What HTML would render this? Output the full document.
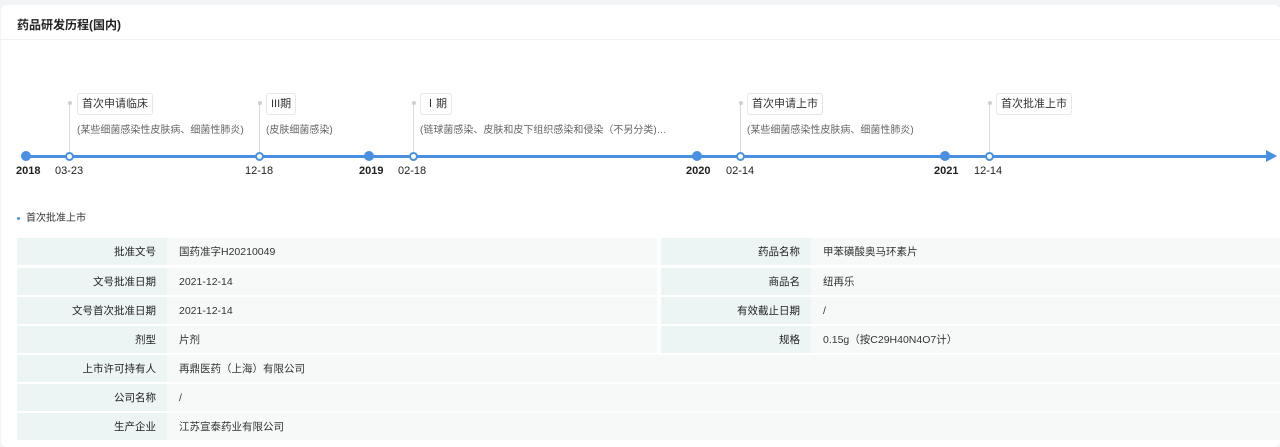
<!DOCTYPE html>
<html><head><meta charset="utf-8"><style>
*{margin:0;padding:0;box-sizing:border-box}
body{width:1280px;height:447px;background:#f3f4f6;font-family:"Liberation Sans","Noto Sans CJK SC",sans-serif;position:relative;overflow:hidden;color:#333}
.card{position:absolute;left:1px;top:5px;width:1279px;height:442px;background:#fff;border-radius:6px}
.title{position:absolute;left:17px;top:16px;font-size:12px;font-weight:bold;color:#222}
.hr{position:absolute;left:1px;top:39px;width:1279px;height:1px;background:#eef0f2}
.line{position:absolute;left:26px;top:155px;width:1242px;height:3px;background:#4a90e2}
.arrow{position:absolute;left:1266px;top:150px;width:0;height:0;border-left:11px solid #4a90e2;border-top:6.5px solid transparent;border-bottom:6.5px solid transparent}
.big{position:absolute;top:151px;width:10px;height:10px;border-radius:50%;background:#4a90e2}
.ring{position:absolute;top:152px;width:9px;height:9px;border-radius:50%;background:#fff;border:2px solid #4a90e2}
.yr{position:absolute;top:165px;font-size:11px;font-weight:bold;color:#222}
.dt{position:absolute;top:165px;font-size:11px;color:#222}
.vl{position:absolute;top:103px;width:1px;height:50px;background:#d8d8d8}
.vd{position:absolute;top:101px;width:4px;height:4px;border-radius:50%;background:#d0d0d0}
.tag{position:absolute;top:93px;height:22px;padding:0 4px;border:1px solid #e4e7eb;border-radius:3px;font-size:11px;line-height:20px;color:#333;background:#fff}
.sub{position:absolute;top:121px;font-size:10px;color:#666}
.sec{position:absolute;left:17px;top:209px;font-size:10px;color:#333}
.sec:before{content:"";display:inline-block;width:3px;height:3px;border-radius:50%;background:#4a90e2;margin-right:6px;vertical-align:middle}
.lb{position:absolute;height:27px;background:#edf4f4;font-size:10.5px;line-height:28px;text-align:right;padding-right:11px;color:#222;width:150px}
.va{position:absolute;height:27px;background:#f7f9f9;font-size:10.5px;line-height:28px;padding-left:12px;color:#333}
</style></head><body>
<div class="card"></div>
<div class="title">药品研发历程(国内)</div>
<div class="hr"></div>
<div class="line"></div><div class="arrow"></div>

<div class="vl" style="left:69px"></div><div class="vd" style="left:68px"></div>
<div class="vl" style="left:259px"></div><div class="vd" style="left:258px"></div>
<div class="vl" style="left:413px"></div><div class="vd" style="left:412px"></div>
<div class="vl" style="left:740px"></div><div class="vd" style="left:739px"></div>
<div class="vl" style="left:989px"></div><div class="vd" style="left:988px"></div>

<div class="big" style="left:21px"></div>
<div class="ring" style="left:65px"></div>
<div class="ring" style="left:255px"></div>
<div class="big" style="left:364px"></div>
<div class="ring" style="left:409px"></div>
<div class="big" style="left:692px"></div>
<div class="ring" style="left:736px"></div>
<div class="big" style="left:940px"></div>
<div class="ring" style="left:985px"></div>

<div class="yr" style="left:16px">2018</div>
<div class="dt" style="left:55px">03-23</div>
<div class="dt" style="left:245px">12-18</div>
<div class="yr" style="left:359px">2019</div>
<div class="dt" style="left:398px">02-18</div>
<div class="yr" style="left:686px">2020</div>
<div class="dt" style="left:726px">02-14</div>
<div class="yr" style="left:934px">2021</div>
<div class="dt" style="left:974px">12-14</div>

<div class="tag" style="left:77px">首次申请临床</div>
<div class="tag" style="left:266px">III期</div>
<div class="tag" style="left:420px">Ⅰ期</div>
<div class="tag" style="left:747px">首次申请上市</div>
<div class="tag" style="left:996px">首次批准上市</div>
<div class="sub" style="left:77px">(某些细菌感染性皮肤病、细菌性肺炎)</div>
<div class="sub" style="left:266px">(皮肤细菌感染)</div>
<div class="sub" style="left:420px">(链球菌感染、皮肤和皮下组织感染和侵染（不另分类)…</div>
<div class="sub" style="left:747px">(某些细菌感染性皮肤病、细菌性肺炎)</div>

<div class="sec">首次批准上市</div>

<div class="lb" style="left:17px;top:238px">批准文号</div><div class="va" style="left:167px;top:238px;width:490px">国药准字H20210049</div>
<div class="lb" style="left:17px;top:268px">文号批准日期</div><div class="va" style="left:167px;top:268px;width:490px">2021-12-14</div>
<div class="lb" style="left:17px;top:297px">文号首次批准日期</div><div class="va" style="left:167px;top:297px;width:490px">2021-12-14</div>
<div class="lb" style="left:17px;top:326px">剂型</div><div class="va" style="left:167px;top:326px;width:490px">片剂</div>
<div class="lb" style="left:17px;top:355px">上市许可持有人</div><div class="va" style="left:167px;top:355px;width:1113px">再鼎医药（上海）有限公司</div>
<div class="lb" style="left:17px;top:384px">公司名称</div><div class="va" style="left:167px;top:384px;width:1113px">/</div>
<div class="lb" style="left:17px;top:413px">生产企业</div><div class="va" style="left:167px;top:413px;width:1113px">江苏宣泰药业有限公司</div>

<div class="lb" style="left:661px;top:238px">药品名称</div><div class="va" style="left:811px;top:238px;width:469px">甲苯磺酸奥马环素片</div>
<div class="lb" style="left:661px;top:268px">商品名</div><div class="va" style="left:811px;top:268px;width:469px">纽再乐</div>
<div class="lb" style="left:661px;top:297px">有效截止日期</div><div class="va" style="left:811px;top:297px;width:469px">/</div>
<div class="lb" style="left:661px;top:326px">规格</div><div class="va" style="left:811px;top:326px;width:469px">0.15g（按C29H40N4O7计）</div>
</body></html>
